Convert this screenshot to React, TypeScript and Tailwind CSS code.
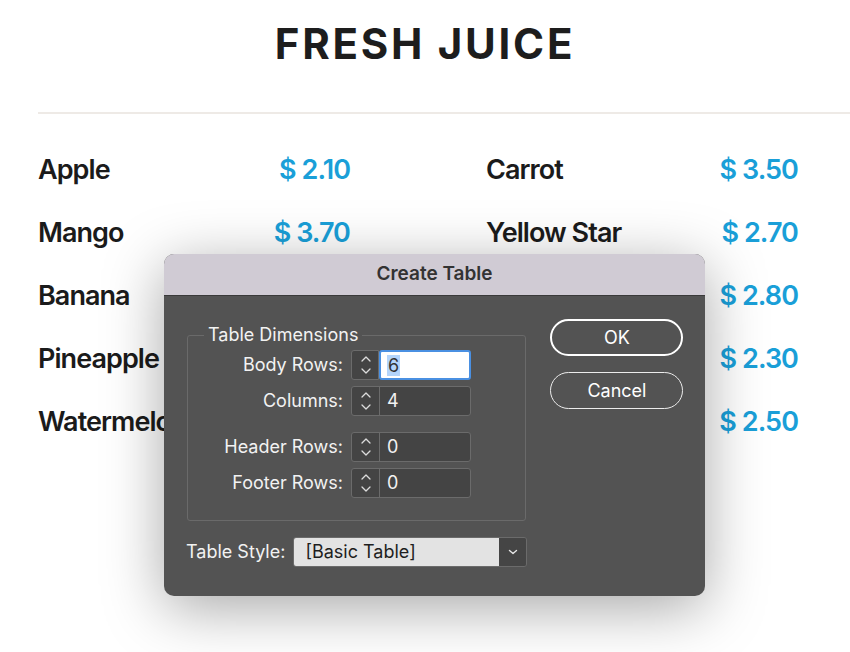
// rows whose other half sits under the dialog leave that half empty
const menuLeft = [
  { name: 'Apple', price: '$ 2.10' },
  { name: 'Mango', price: '$ 3.70' },
  { name: 'Banana', price: '' },
  { name: 'Pineapple', price: '' },
  { name: 'Watermelon', price: '' },
];

const menuRight = [
  { name: 'Carrot', price: '$ 3.50' },
  { name: 'Yellow Star', price: '$ 2.70' },
  { name: '', price: '$ 2.80' },
  { name: '', price: '$ 2.30' },
  { name: '', price: '$ 2.50' },
];

function MenuColumn({ items }: { items: { name: string; price: string }[] }) {
  return (
    <div className="flex flex-col">
      {items.map((it, i) => (
        <div key={i} className="flex justify-between h-[63px] leading-[63px] text-[27px] font-semibold tracking-[-0.035em]">
          <span className="text-[#1b1b1b]">{it.name}</span>
          <span className="text-[#1a9fd8]">{it.price}</span>
        </div>
      ))}
    </div>
  );
}

function Spinner() {
  return (
    <div className="w-[27px] h-full flex items-center justify-center">
      <svg width="12" height="26" viewBox="0 0 12 26" fill="none" stroke="#dcdcdc" strokeWidth={1.3} strokeLinecap="round" strokeLinejoin="round">
        <path d="M2 9l4-4 4 4" />
        <path d="M2 17l4 4 4-4" />
      </svg>
    </div>
  );
}

function NumberRow({ label, value, focused, className = '' }: { label: string; value: string; focused?: boolean; className?: string }) {
  return (
    <div className={`flex items-center h-[30px] ${className}`}>
      <span className="w-[155px] text-right leading-[22px]">{label}</span>
      {focused ? (
        <div className="ml-[8px] flex h-[30px]">
          <div className="w-[28px] border border-[#6b6b6b] rounded-l-[3px] bg-[#444]">
            <Spinner />
          </div>
          <div className="w-[92px] bg-white border-2 border-[#4a90e2] rounded-[3px] flex items-center pl-[6px] text-[#333]">
            <span className="bg-[#b3d4fb] px-[1px] leading-[21px]">{value}</span>
          </div>
        </div>
      ) : (
        <div className="ml-[8px] flex w-[120px] h-[30px] border border-[#6b6b6b] rounded-[3px] bg-[#444]">
          <div className="border-r border-[#6b6b6b]">
            <Spinner />
          </div>
          <div className="flex items-center pl-[7px] leading-[22px]">{value}</div>
        </div>
      )}
    </div>
  );
}

function CreateTableDialog() {
  return (
    <div className="absolute left-[164px] top-[254px] w-[541px] h-[342px] rounded-[10px] overflow-hidden bg-[#535353] shadow-[0_12px_60px_rgba(0,0,0,0.35)] text-[18px] text-[#f2f2f2] font-['Inter',sans-serif]">
      <div className="h-[42px] bg-[#d0cbd4] border-b border-[#3a3a3a] flex items-center justify-center text-[19px] font-semibold text-[#333]">
        Create Table
      </div>
      <div className="flex">
        <div className="ml-[22px] flex flex-col">
          <fieldset className="ml-[1px] mt-[28px] w-[339px] border border-[#6a6a6a] rounded-[3px] pb-[22px]">
            <legend className="ml-[16px] px-[4px] leading-[22px]">Table Dimensions</legend>
            <div className="mt-[4px] flex flex-col gap-[6px]">
              <NumberRow label="Body Rows:" value="6" focused />
              <NumberRow label="Columns:" value="4" />
              <NumberRow label="Header Rows:" value="0" className="mt-[10px]" />
              <NumberRow label="Footer Rows:" value="0" />
            </div>
          </fieldset>
          <div className="mt-[16px] flex items-center h-[30px]">
            <span className="leading-[22px]">Table Style:</span>
            <div className="ml-[8px] flex h-[30px] border border-[#6b6b6b] rounded-[3px] overflow-hidden">
              <div className="w-[205px] bg-[#e3e3e3] text-[#1e1e1e] flex items-center pl-[11px] leading-[22px]">[Basic Table]</div>
              <div className="w-[27px] bg-[#454545] flex items-center justify-center">
                <svg width="10" height="6" viewBox="0 0 10 6" fill="none" stroke="#e6e6e6" strokeWidth={1.4} strokeLinecap="round" strokeLinejoin="round">
                  <path d="M1.5 1.5L5 4.5l3.5-3" />
                </svg>
              </div>
            </div>
          </div>
        </div>
        <div className="ml-[23px] pt-[23px] flex flex-col gap-[16px]">
          <button type="button" className="w-[133px] h-[37px] rounded-full border-2 border-white text-white">OK</button>
          <button type="button" className="w-[133px] h-[37px] rounded-full border-[1.5px] border-[#ececec] text-white">Cancel</button>
        </div>
      </div>
    </div>
  );
}

export default function App() {
  return (
    <div className="relative w-[850px] h-[652px] bg-white overflow-hidden font-['Inter',sans-serif]">
      <h1 className="pt-[23px] text-center text-[42px] leading-[42px] font-bold tracking-[0.065em] text-[#1d1d1d]">FRESH JUICE</h1>
      <div className="mt-[47px] ml-[38px] h-[2px] bg-[#eeeae6]" />
      <div className="mt-[24px] ml-[38px] grid grid-cols-[312px_312px] gap-x-[136px]">
        <MenuColumn items={menuLeft} />
        <MenuColumn items={menuRight} />
      </div>
      <CreateTableDialog />
    </div>
  );
}
